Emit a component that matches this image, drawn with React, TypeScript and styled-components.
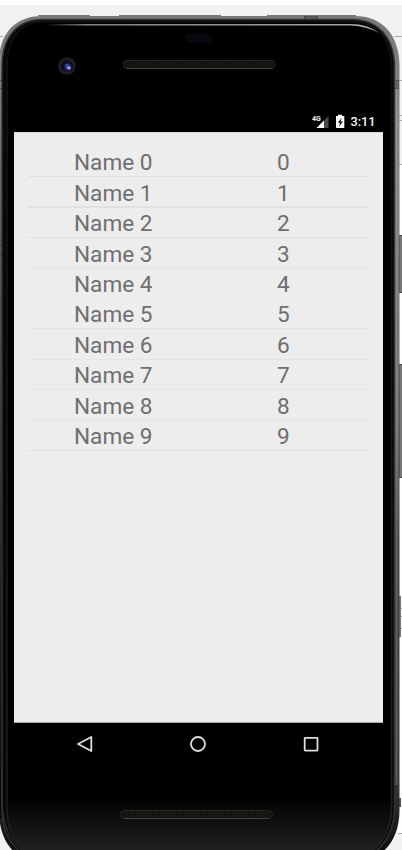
import React from "react";
import styled, { createGlobalStyle } from "styled-components";

const GlobalStyle = createGlobalStyle`
  * { box-sizing: border-box; }
  body { margin: 0; background: #fff; overflow: hidden; }
`;

const Stage = styled.main`
  position: relative;
  width: 402px;
  height: 850px;
  overflow: hidden;
  background: #f1f1f1;
  font-family: Roboto, "Liberation Sans", sans-serif;
`;

const CasingArt = styled.svg`
  position: absolute;
  inset: 0;
  pointer-events: none;
`;

const Device = styled.div`
  position: relative;
  display: flex;
  flex-direction: column;
  width: 369px;
  height: 850px;
  margin-left: 14px;
  padding-top: 109px;
`;

const StatusBar = styled.header`
  display: flex;
  align-items: center;
  justify-content: flex-end;
  height: 23px;
  padding: 2px 7.5px 0 0;
  color: #f5f5f5;
`;

const StatusIcons = styled.svg`
  display: block;
  margin: -2px 4.5px 0 0;
`;

const Clock = styled.time`
  font-size: 12.8px;
  font-weight: 500;
  line-height: 16px;
  letter-spacing: -0.05px;
`;

const Screen = styled.section`
  height: 591px;
  padding: 14px 15px 0 14px;
  background: #ededed;
  border-top: 1px solid #dfdbdf;
  border-bottom: 1px solid #aaa;
`;

const Row = styled.div<{ $rule: string; $weight?: number }>`
  display: grid;
  grid-template-columns: 203px 1fr;
  height: 30.4px;
  padding: 2.45px 0 0 46px;
  border-bottom: ${(p) => p.$weight ?? 1}px solid ${(p) => p.$rule};
`;

const Cell = styled.span`
  color: #6f6f6f;
  font-size: 22.6px;
  line-height: 28px;
  height: 27px;
  white-space: nowrap;
`;

const NavBar = styled.nav`
  display: flex;
  justify-content: space-between;
  height: 43px;
  padding: 12px 63px 0 62px;
`;

const NavIcon = styled.svg`
  display: block;
  width: 18px;
  height: 18px;
  fill: none;
  stroke: #dedede;
  stroke-width: 1.8;
  stroke-linejoin: round;
`;

const rules = ["#e0e0e0", "#e1e1e1", "#dfdfdf", "#e3e3e3", "transparent", "#e5e5e5", "#e5e5e5", "#e4e4e4", "#e5e5e5", "#e0e0e0"];

function Speaker({ x, y }: { x: number; y: number }) {
  return (
    <g>
      <rect x={x + 0.5} y={y + 0.5} width="152" height="8" rx="4" fill="#11110f" stroke="#292826" />
      <rect x={x + 4} y={y + 2} width="146" height="5" fill="url(#mesh)" />
      <path d={`M${x + 4} ${y + 8.5}h145`} stroke="#464541" strokeWidth="1" />
    </g>
  );
}

function Casing() {
  return (
    <CasingArt width="402" height="850" viewBox="0 0 402 850">
      <defs>
        <linearGradient id="metal" x1="0" y1="0" x2="0" y2="1">
          <stop offset="0" stopColor="#777775" />
          <stop offset="0.12" stopColor="#848484" />
          <stop offset="0.48" stopColor="#6b6b6b" />
          <stop offset="0.63" stopColor="#444" />
          <stop offset="0.9" stopColor="#3a3a38" />
          <stop offset="1" stopColor="#050505" />
        </linearGradient>
        <linearGradient id="leftMetal" x1="0" y1="0" x2="0" y2="1">
          <stop offset="0" stopColor="#888" />
          <stop offset="0.3" stopColor="#555" />
          <stop offset="0.7" stopColor="#202020" />
          <stop offset="1" stopColor="#080808" />
        </linearGradient>
        <linearGradient id="chin" x1="0" y1="0" x2="0" y2="1">
          <stop offset="0" stopColor="#000" />
          <stop offset="0.925" stopColor="#000" />
          <stop offset="1" stopColor="#252525" />
        </linearGradient>
        <linearGradient id="gloss">
          <stop offset="0" stopColor="#889293" stopOpacity="0" />
          <stop offset="0.12" stopColor="#7d8889" />
          <stop offset="1" stopColor="#a3aaaa" />
        </linearGradient>
        <linearGradient id="innerEdge" x1="0" y1="0" x2="0" y2="1">
          <stop offset="0" stopColor="#111" />
          <stop offset="0.5" stopColor="#171717" />
          <stop offset="1" stopColor="#202020" />
        </linearGradient>
        <radialGradient id="lens">
          <stop offset="0" stopColor="#7482d0" />
          <stop offset="0.4" stopColor="#303fa0" />
          <stop offset="1" stopColor="#0b0e2e" />
        </radialGradient>
        <pattern id="mesh" width="3" height="5" patternUnits="userSpaceOnUse">
          <rect width="3" height="5" fill="#12110e" />
          <path d="M1.5 0v5" stroke="#211e19" />
        </pattern>
      </defs>

      <path d="M0 0H402V5H0zM398 165h4v668h-4z" fill="#fdfdfd" />
      <path d="M394 36.5h8M398 80.5h4M398 115.5h4M398 120.5h4M398 164.5h4M398 833.5h4M0 36.5h3" stroke="#aaa" />
      <g fill="#777" stroke="#444">
        <rect x="399.5" y="235.5" width="5" height="57" />
        <rect x="399.5" y="364.5" width="5" height="113" />
      </g>
      <rect x="399" y="596" width="2" height="41" fill="#777" />
      <path d="M399 608.5h3M399 616.5h3M399 628.5h3" stroke="#8b8b9b" />
      <rect x="399" y="798" width="2" height="9" fill="#555" />

      <path d="M38 15.5H90M119 15.5H221M267 15.5H356" stroke="#777a77" />
      <path d="M42 16H354C382 16 399 34 399.5 66V811C399 842 381 864 345 864H47C17 864-1 843-1 811V62C-1 34 15 16 42 16Z" fill="url(#metal)" />
      <path d="M-1 54H3V819H-1z" fill="url(#leftMetal)" />
      <path d="M43 19.5H351C377 19.5 394 36 394.5 67V808C394 839 376 861 345 861H49C20 861 2 839 2 808V67C2 36 18 19.5 43 19.5Z" fill="#080808" stroke="#303230" strokeWidth="1.5" />
      <path d="M44 21.5H350C377 22 391 38 391.5 68V808C391 838 374 859 345 859H50C24 859 7 838 7 808V68C7 37 21 21.5 44 21.5Z" fill="url(#chin)" stroke="url(#innerEdge)" strokeWidth="1.5" />
      <path d="M12.5 60V790M385 60V790" stroke="#000" strokeWidth="4" />
      <path d="M396.5 79V785" stroke="#c0c0c0" strokeOpacity="0.25" strokeWidth="2" />
      <path d="M46 24H351Q368 24 379 33Q366 26 351 25.5H46z" fill="url(#gloss)" />
      <path d="M2 765V800C2 823 10 841 22 850" fill="none" stroke="#383838" strokeWidth="1" />
      <path d="M0 80.5h2M0 88.5h2M0 245.5h3M0 254.5h3M394 80.5h5M394 88.5h5M394 786.5h5M394 795.5h5" stroke="#222" strokeOpacity="0.5" />
      <path d="M395 81h4v7h-4z" fill="#666" />
      <path d="M305 16h12v3h-12z" fill="#555" />
      <path d="M304.5 16v3M317.5 16v3" stroke="#444" />

      <rect x="185" y="34" width="27" height="9" rx="4.5" fill="#07080d" />
      <circle cx="67" cy="66" r="8.8" fill="#211e1e" />
      <circle cx="67" cy="66" r="5.8" fill="#0b0c20" />
      <ellipse cx="68" cy="67" rx="4.5" ry="4" fill="url(#lens)" transform="rotate(35 68 67)" />
      <circle cx="69" cy="68" r="1.6" fill="#99a4ee" />
      <circle cx="66.5" cy="64.5" r="0.8" fill="#4e62c0" />
      <Speaker x={122.5} y={60} />
      <Speaker x={120} y={810} />
    </CasingArt>
  );
}

export default function App() {
  return (
    <>
      <GlobalStyle />
      <Stage>
        <Casing />
        <Device>
          <StatusBar>
            <StatusIcons width="34" height="16" viewBox="0 0 34 16" aria-label="4G signal and charging battery">
              <path d="M16.5 3V15H4.5z" fill="#4b4b4b" />
              <path d="M12 7.5V15H4.5z" fill="#fff" />
              <text x="0" y="8.3" fill="#f5f5f5" stroke="#000" strokeWidth="1.5" paintOrder="stroke" fontFamily="Roboto, sans-serif" fontSize="7" fontWeight="700">4G</text>
              <path d="M26 1.8h4V3h2.3v12H24V3h2z" fill="#fff" />
              <path d="m29.8 4.8-4 5h2.3l-1.2 4 4-5.2h-2.4z" fill="#080808" />
            </StatusIcons>
            <Clock>3:11</Clock>
          </StatusBar>
          <Screen>
            {rules.map((rule, i) => (
              <Row key={i} $rule={rule} $weight={i === 1 ? 2 : 1}>
                <Cell>Name {i}</Cell>
                <Cell>{i}</Cell>
              </Row>
            ))}
          </Screen>
          <NavBar>
            <NavIcon aria-label="Back"><path d="M15.3 2V16L2.1 9z" /></NavIcon>
            <NavIcon aria-label="Home"><circle cx="9" cy="9" r="7" /></NavIcon>
            <NavIcon aria-label="Recent apps"><rect x="2.7" y="2.8" width="12.8" height="12.8" rx="0.5" /></NavIcon>
          </NavBar>
        </Device>
      </Stage>
    </>
  );
}
